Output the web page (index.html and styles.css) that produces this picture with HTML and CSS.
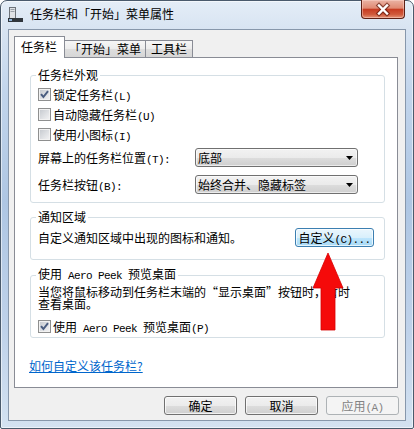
FILE: index.html
```html
<!DOCTYPE html>
<html lang="zh-CN">
<head>
<meta charset="utf-8">
<title>任务栏和「开始」菜单属性</title>
<link rel="stylesheet" href="styles.css">
</head>
<body>
<div class="window">
  <div class="titlebar">
    <svg class="app-icon" width="15" height="15" viewBox="0 0 15 15">
      <rect x="1.5" y="0.5" width="6" height="11" fill="#dfe2e6" stroke="#6d737a"/>
      <rect x="2.5" y="2" width="4" height="1" fill="#9aa1a8"/>
      <rect x="2.5" y="4" width="4" height="1" fill="#9aa1a8"/>
      <rect x="0" y="11" width="15" height="4" fill="#30363c"/>
      <rect x="1" y="12" width="3" height="2" fill="#8fb3d9"/>
    </svg>
    <span class="title">任务栏和「开始」菜单属性</span>
    <button class="close" type="button" aria-label="关闭">
      <svg width="44" height="19" viewBox="0 0 44 19">
        <path d="M18 5.5 L26 13.5 M26 5.5 L18 13.5" stroke="#5a1408" stroke-opacity="0.65" stroke-width="4.6" stroke-linecap="square" fill="none"/>
        <path d="M18 5.5 L26 13.5 M26 5.5 L18 13.5" stroke="#ffffff" stroke-width="2.4" stroke-linecap="square" fill="none"/>
      </svg>
    </button>
  </div>

  <div class="client">
    <div class="tabs">
      <div class="tab active t1">任务栏</div>
      <div class="tab t2">「开始」菜单</div>
      <div class="tab t3">工具栏</div>
    </div>

    <div class="panel">
      <fieldset class="group g1">
        <legend>任务栏外观</legend>
        <label class="check-row">
          <span class="cb"><svg width="11" height="11" viewBox="0 0 11 11"><path d="M2 5.2 L4.4 8 L9 2.2" stroke="#4a5d80" stroke-width="2" fill="none"/></svg></span><span class="check-text">锁定任务栏<span class="en">(L)</span></span>
        </label>
        <label class="check-row">
          <span class="cb"></span><span class="check-text">自动隐藏任务栏<span class="en">(U)</span></span>
        </label>
        <label class="check-row">
          <span class="cb"></span><span class="check-text">使用小图标<span class="en">(I)</span></span>
        </label>
        <div class="combo-row">
          <span class="combo-label">屏幕上的任务栏位置<span class="en">(T):</span></span>
          <div class="combo"><span class="combo-text">底部</span><svg class="combo-arrow" width="7" height="4" viewBox="0 0 7 4"><polygon points="0,0 7,0 3.5,4" fill="#000"/></svg></div>
        </div>
        <div class="combo-row">
          <span class="combo-label">任务栏按钮<span class="en">(B):</span></span>
          <div class="combo"><span class="combo-text">始终合并、隐藏标签</span><svg class="combo-arrow" width="7" height="4" viewBox="0 0 7 4"><polygon points="0,0 7,0 3.5,4" fill="#000"/></svg></div>
        </div>
      </fieldset>

      <fieldset class="group g2">
        <legend>通知区域</legend>
        <div class="notify-row">
          <span>自定义通知区域中出现的图标和通知。</span>
          <button class="btn btn-default" type="button">自定义<span class="en">(C)...</span></button>
        </div>
      </fieldset>

      <fieldset class="group g3">
        <legend>使用<span class="en"> Aero Peek </span>预览桌面</legend>
        <p class="desc">当您将鼠标移动到任务栏末端的“显示桌面”按钮时，暂时<br>查看桌面。</p>
        <label class="check-row">
          <span class="cb"><svg width="11" height="11" viewBox="0 0 11 11"><path d="M2 5.2 L4.4 8 L9 2.2" stroke="#4a5d80" stroke-width="2" fill="none"/></svg></span><span class="check-text">使用<span class="en"> Aero Peek </span>预览桌面<span class="en">(P)</span></span>
        </label>
      </fieldset>

      <a class="help-link" href="#">如何自定义该任务栏?</a>
    </div>

    <div class="actions">
      <button class="btn" type="button">确定</button>
      <button class="btn" type="button">取消</button>
      <button class="btn btn-disabled" type="button" disabled>应用<span class="en">(A)</span></button>
    </div>
  </div>

  <svg class="red-arrow" width="32" height="80" viewBox="0 0 32 80">
    <polygon points="16,1 31,36 23,36 23,78 9,78 9,36 1,36" fill="#f50a0a" stroke="#d80000" stroke-width="0.8"/>
  </svg>
</div>
</body>
</html>
```

FILE: styles.css
```css
* {
  box-sizing: border-box;
}

html,
body {
  margin: 0;
  padding: 0;
}

body {
  width: 414px;
  height: 429px;
  overflow: hidden;
  background: #ffffff;
  font-family: "Noto Sans CJK SC", "Noto Sans", sans-serif;
  font-size: 12px;
  color: #000000;
}

.en {
  font-family: "Liberation Mono", monospace;
  font-size: 11px;
  letter-spacing: -0.6px;
}

/* ---------- window frame ---------- */
.window {
  position: relative;
  width: 414px;
  height: 429px;
  border: 1px solid #4a5a6c;
  border-radius: 7px 7px 2px 2px;
  padding: 0 7px 7px 7px;
  display: flex;
  flex-direction: column;
  background: linear-gradient(to bottom,
      #e4edf7 0px,
      #d8e4f2 28px,
      #c2d5ec 90px,
      #aec6e3 200px,
      #bfd2ea 330px,
      #d4e2f1 429px);
  box-shadow: inset 0 0 0 1px rgba(255, 255, 255, 0.55);
}

.titlebar {
  height: 28px;
  display: flex;
  align-items: flex-start;
  flex-shrink: 0;
}

.app-icon {
  margin-top: 6px;
  flex-shrink: 0;
}

.title {
  margin-left: 7px;
  margin-top: 6px;
  line-height: 14px;
  white-space: nowrap;
}

.close {
  margin-left: auto;
  margin-right: 1px;
  margin-top: -1px;
  width: 44px;
  height: 19px;
  padding: 0;
  border: 1px solid #5d2015;
  border-top: none;
  border-radius: 0 0 4px 4px;
  background: linear-gradient(to bottom,
      #eab3a4 0%,
      #e08a73 45%,
      #c73c22 52%,
      #d05a3c 80%,
      #e59478 100%);
  box-shadow: inset 0 0 0 1px rgba(255, 220, 210, 0.45);
  display: block;
}

.close svg {
  display: block;
  margin-left: -1px;
}

/* ---------- client area ---------- */
.client {
  flex: 1;
  display: flex;
  flex-direction: column;
  background: #f0f0f0;
  border: 1px solid #8797ab;
  padding: 6px 7px 5px 5px;
}

.tabs {
  height: 21px;
  display: flex;
  align-items: flex-end;
  flex-shrink: 0;
}

.tab {
  height: 17px;
  line-height: 16px;
  border: 1px solid #898c95;
  border-bottom: none;
  margin-left: -1px;
  background: linear-gradient(to bottom, #f6f6f6 0%, #ececec 50%, #dedede 51%, #d6d6d6 100%);
  white-space: nowrap;
}

.tab.t1 {
  padding: 0 7px 0 6px;
}

.tab.t2 {
  padding: 0 4px;
}

.tab.t3 {
  padding: 0 5px;
}

.tab.active {
  height: 22px;
  line-height: 20px;
  margin-left: 0;
  margin-bottom: -1px;
  background: #ffffff;
  position: relative;
  z-index: 1;
}

.panel {
  flex: 1;
  display: flex;
  flex-direction: column;
  background: #ffffff;
  border: 1px solid #898c95;
  padding: 10px 12px 0 15px;
}

/* ---------- group boxes ---------- */
.group {
  margin: 0;
  min-width: 0;
  border: 1px solid #d5dfe5;
  border-radius: 3px;
}

.group legend {
  padding: 0 2px;
  margin-left: -2px;
  line-height: 14px;
  white-space: nowrap;
}

.g1 {
  padding: 2px 6px 8px 7px;
}

.g2 {
  margin-top: 7px;
  padding: 4px 6px 12px 7px;
}

.g3 {
  margin-top: 7px;
  padding: 3px 6px 1px 7px;
}

.check-row {
  display: flex;
  align-items: center;
  gap: 2px;
  height: 20px;
  white-space: nowrap;
}

.check-text {
  white-space: pre;
}

.cb {
  width: 13px;
  height: 13px;
  flex-shrink: 0;
  border: 1px solid #8e8f8f;
  background: linear-gradient(135deg, #c3c7cd 0%, #dfe1e4 55%, #f4f4f5 100%);
  box-shadow: inset 0 0 0 1px #f2f2f2;
  display: flex;
  align-items: center;
  justify-content: center;
}

.cb svg {
  display: block;
}

.combo-row {
  display: flex;
  align-items: center;
  margin-top: 4px;
}

.combo-row + .combo-row {
  margin-top: 8px;
}

.combo-label {
  width: 157px;
  flex-shrink: 0;
  white-space: nowrap;
}

.combo {
  width: 163px;
  height: 19px;
  display: flex;
  align-items: center;
  padding: 0 4px 0 2px;
  border: 1px solid #707070;
  border-radius: 3px;
  background: linear-gradient(to bottom, #f2f2f2 0%, #ebebeb 50%, #dddddd 51%, #cfcfcf 100%);
  box-shadow: inset 0 0 0 1px rgba(255, 255, 255, 0.6);
}

.combo-text {
  line-height: 17px;
  white-space: nowrap;
}

.combo-arrow {
  margin-left: auto;
  display: block;
}

.notify-row {
  display: flex;
  align-items: center;
  justify-content: space-between;
  padding-right: 4px;
  height: 19px;
  white-space: nowrap;
}

.desc {
  margin: 0;
  line-height: 12px;
  white-space: nowrap;
}

.g3 .check-row {
  margin-top: 6px;
}

.help-link {
  align-self: flex-start;
  margin-top: 21px;
  margin-left: -1px;
  line-height: 14px;
  color: #0066cc;
  text-decoration: underline;
}

/* ---------- buttons ---------- */
.btn {
  width: 73px;
  height: 19px;
  padding: 0;
  font-family: inherit;
  font-size: 12px;
  line-height: 17px;
  color: #000000;
  border: 1px solid #707070;
  border-radius: 3px;
  background: linear-gradient(to bottom, #f2f2f2 0%, #ebebeb 50%, #dddddd 51%, #cfcfcf 100%);
  box-shadow: inset 0 0 0 1px rgba(255, 255, 255, 0.7);
  white-space: nowrap;
}

.btn-default {
  width: 79px;
  border-color: #3c7fb1;
  background: linear-gradient(to bottom, #eaf6fd 0%, #d9f0fc 50%, #bee6fd 51%, #a7d9f5 100%);
}

.btn-disabled {
  color: #838383;
  border-color: #adb2b5;
  background: #f4f4f4;
  box-shadow: none;
}

.actions {
  display: flex;
  justify-content: flex-end;
  gap: 8px;
  margin-top: 8px;
  margin-right: -1px;
  flex-shrink: 0;
}

/* ---------- annotation overlay ---------- */
.red-arrow {
  position: absolute;
  left: 311px;
  top: 251px;
  display: block;
}
```
